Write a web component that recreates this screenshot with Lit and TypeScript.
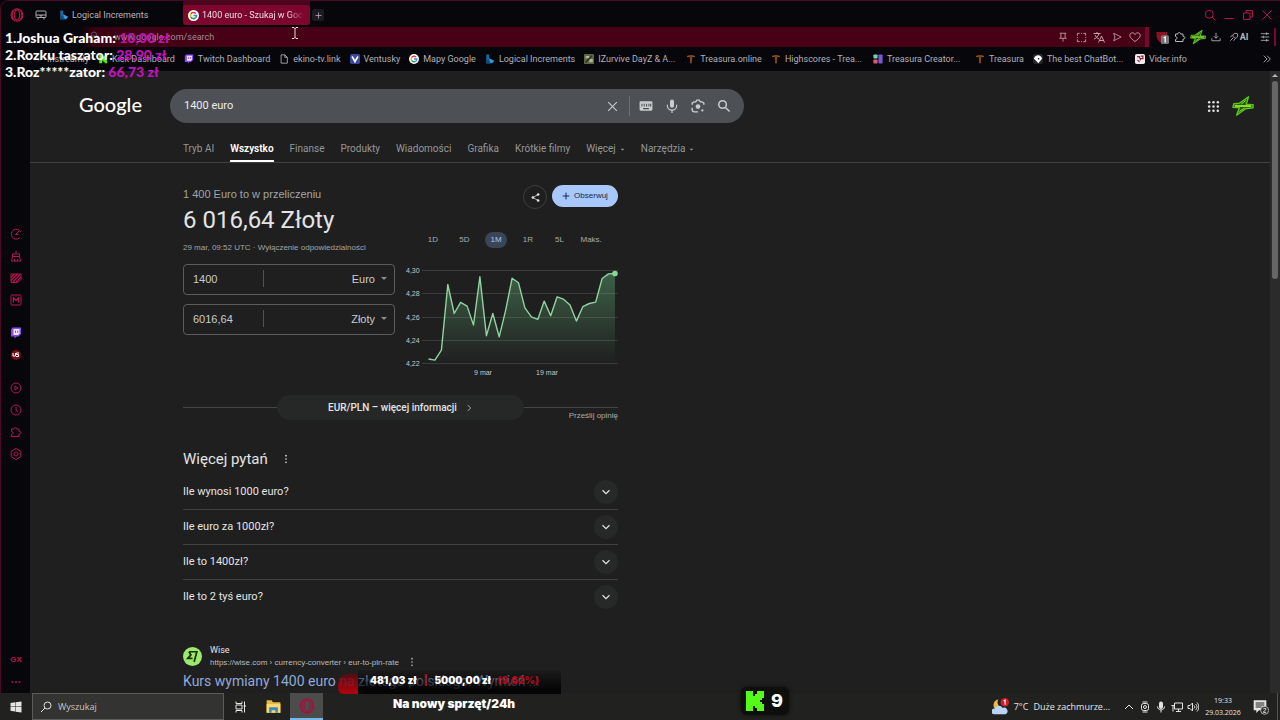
import { LitElement, html, css, svg, nothing } from "lit";
import { customElement, property } from "lit/decorators.js";
import { classMap } from "lit/directives/class-map.js";

const icon = (body: unknown, size = 12, box = 24, cls = "line") => html`
  <svg class=${cls} width=${size} height=${size} viewBox="0 0 ${box} ${box}" aria-hidden="true">${body}</svg>`;

const bolt = svg`<g stroke="#57c41c" stroke-width="1.6" fill="#1d5a10" stroke-linejoin="round">
  <path d="M18 2 8 9 2 9.500 1 13.500 8 14 5 22 15 15 23 14 23 10.500 15.500 10Z"/><path d="M3 12h18" stroke="#a4e02c" stroke-width="2"/>
  <path d="m15 6-5 4M8 18l6-4" stroke="#b8dc38" stroke-width="1"/></g>`;
const opera = svg`<ellipse cx="12" cy="12" rx="10" ry="10.500"/><ellipse cx="12" cy="12" rx="4.500" ry="8.500"/><path d="M6 4c-3 4-3 12 0 16M18 4c3 4 3 12 0 16"/>`;
const puzzle = svg`<path d="M3 6h5c-1-4 6-4 5 0h5v5c5-1 5 6 0 5v5H3v-4c4 0 4-6 0-6Z"/>`;
const twitch = svg`<path d="M5 1h17v13l-5 5h-4l-4 4v-4H2V5Z" fill="#8a4df5"/><path d="M7 4h12v9l-3 3H7Z" fill="#f0e8ff"/><path d="M11 7v5M15.500 7v5" stroke="#8a4df5" stroke-width="2"/>`;
const google = svg`<circle cx="12" cy="12" r="12" fill="#fff"/><g fill="none" stroke-width="3.400"><path d="M17 7.500A6.700 6.700 0 0 0 6.200 8.700" stroke="#e34133"/><path d="M6.200 8.700a6.700 6.700 0 0 0 0 6.600" stroke="#f3b605"/><path d="M6.200 15.300a6.700 6.700 0 0 0 10 2" stroke="#32a350"/><path d="M16.200 17.300A6.700 6.700 0 0 0 18.700 12H12" stroke="#4280ef"/></g>`;
const logical = svg`<path d="M3 1h7v12l11 5-6 5H3Z" fill="#1769a5"/><path d="m10 10 12 6-5 6-7-4Z" fill="#3a9bd8"/><path d="M3 14h8v8H3Z" fill="#114a78"/>`;
const treasura = svg`<path d="M2 5c5-3 15-3 20 0l-2 3-5-2-1 16h-4L9 6 4 8Z" fill="#a55a20"/><path d="M12 4v17" stroke="#4f2a12" stroke-width="2"/>`;
const caret = svg`<path d="m6 9 6 6 6-6"/>`;

interface Mark { label: string; art: unknown; wide?: boolean }
const MARKS: Mark[] = [
  { label: "Instreamly", art: svg`<circle cx="12" cy="12" r="8" fill="#16161d"/>` },
  { label: "Kick Dashboard", art: svg`<path d="M3 2h7v6h3V5h3V2h6v7h-3v6h3v7h-6v-3h-3v-3h-3v6H3Z" fill="#4df01c"/>` },
  { label: "Twitch Dashboard", art: twitch },
  { label: "ekino-tv.link", art: svg`<path d="M5 2h9l6 6v14H5ZM14 2v6h6" fill="none" stroke="#b9b9bd" stroke-width="2"/>` },
  { label: "Ventusky", art: svg`<rect width="24" height="24" rx="4" fill="#39489c"/><path d="m5 6 7 12 7-12" fill="none" stroke="#fff" stroke-width="4"/>` },
  { label: "Mapy Google", art: google },
  { label: "Logical Increments", art: logical },
  { label: "IZurvive DayZ & A...", art: svg`<rect width="24" height="24" rx="2" fill="#5b6448"/><path d="M4 5h9v5H4ZM14 12h7v8h-9Z" fill="#b4b593"/><path d="m4 20 15-16" stroke="#23281b" stroke-width="3"/>`, wide: true },
  { label: "Treasura.online", art: treasura },
  { label: "Highscores - Trea...", art: treasura, wide: true },
  { label: "Treasura Creator...", art: svg`<rect x="1" y="1" width="10" height="10" rx="2" fill="#73d3a4"/><rect x="1" y="13" width="10" height="10" rx="2" fill="#d85b78"/><rect x="13" y="1" width="10" height="22" rx="2" fill="#7657d8"/>`, wide: true },
  { label: "Treasura", art: treasura },
  { label: "The best ChatBot...", art: svg`<rect width="24" height="24" rx="5" fill="#25252c"/><path d="M5 6c6-4 9-4 14 0l3 5-9 11L2 11Z" fill="#fff"/><path d="m12 10 3 3" stroke="#25252c" stroke-width="3"/>`, wide: true },
  { label: "Vider.info", art: svg`<rect width="24" height="24" rx="4" fill="#f3e9ec"/><path d="M5 6h6v5M14 5h5v6h-6v4M6 14l5 5" fill="none" stroke="#8d2742" stroke-width="3"/>` },
];

const RATES = [
  4.224, 4.2231, 4.2317, 4.288, 4.2631, 4.2726, 4.2694, 4.2531, 4.2946, 4.244, 4.2631, 4.2431, 4.266, 4.2934, 4.2894,
  4.268, 4.2603, 4.258, 4.2737, 4.2611, 4.2774, 4.2754, 4.2703, 4.2566, 4.2689, 4.2717, 4.2729, 4.2931, 4.2971, 4.2974,
];

@customElement("rate-chart")
class RateChart extends LitElement {
  static styles = css`
    :host { display: block; }
    .plot { display: block; }
    .label { font: 7px "Liberation Sans", Arial, sans-serif; fill: #c4c7c5; }
    .rule { stroke: #3a3b3c; }
    .trend { fill: none; stroke: #8fd3a0; stroke-width: 1.4; stroke-linejoin: round; }
  `;
  render() {
    const y = (v: number) => 6.5 + ((4.3 - v) / 0.08) * 93.2;
    const x = (i: number) => 22.5 + i * 6.43;
    const line = RATES.map((v, i) => `${x(i).toFixed(1)},${y(v).toFixed(1)}`).join(" ");
    const end = RATES.length - 1;
    return html`<svg class="plot" width="212" height="115" viewBox="0 0 212 115" role="img" aria-label="EUR/PLN">
      <defs><linearGradient id="fade" x1="0" y1="0" x2="0" y2="1">
        <stop offset="0" stop-color="#6fc987" stop-opacity=".38"/><stop offset="1" stop-color="#6fc987" stop-opacity="0"/>
      </linearGradient></defs>
      ${[4.3, 4.28, 4.26, 4.24, 4.22].map((v) => svg`
        <line class="rule" x1="16" x2="212" y1=${Math.floor(y(v)) + 0.5} y2=${Math.floor(y(v)) + 0.5}/>
        <text class="label" x="0" y=${Math.floor(y(v)) + 3}>${v.toFixed(2).replace(".", ",")}</text>`)}
      <polygon fill="url(#fade)" points="22.5,99.7 ${line} ${x(end)},99.7"/>
      <polyline class="trend" points=${line}/>
      <circle cx=${x(end)} cy=${y(RATES[end])} r="2.8" fill="#7fd99a"/>
      <text class="label" x="77" y="111" text-anchor="middle">9 mar</text>
      <text class="label" x="141" y="111" text-anchor="middle">19 mar</text>
    </svg>`;
  }
}

@customElement("currency-field")
class CurrencyField extends LitElement {
  @property() amount = "";
  @property() unit = "";
  static styles = css`
    :host { display: flex; align-items: center; height: 31px; box-sizing: border-box; padding-bottom: 2px; border: 1px solid #5a5c5f; border-radius: 4px; }
    .amount, .unit { font: 11px "Liberation Sans", Arial, sans-serif; color: #c9cbcd; background: none; border: 0; outline: 0; padding: 0; }
    .amount { width: 71px; padding-left: 9px; box-sizing: border-box; }
    .split { width: 1px; height: 17px; margin-left: 8px; background: #505255; }
    .unit { flex: 1; min-width: 0; appearance: none; text-align-last: right; }
    .tri { margin: 0 7px 0 6px; border: 3px solid transparent; border-top-color: #8d9093; border-bottom: 0; }
  `;
  render() {
    return html`<input class="amount" aria-label="Kwota" .value=${this.amount} />
      <span class="split"></span>
      <select class="unit" aria-label="Waluta"><option>${this.unit}</option></select>
      <span class="tri"></span>`;
  }
}

@customElement("browser-chrome")
class BrowserChrome extends LitElement {
  static styles = css`
    :host { display: block; font: 9px/12px Roboto, sans-serif; color: #b7b6bd; }
    svg { display: block; flex: none; }
    .line { fill: none; stroke: currentColor; stroke-width: 2; }
    button { font: inherit; color: inherit; background: none; border: 0; padding: 0; display: flex; align-items: center; justify-content: center; }
    .tabs { display: flex; height: 27px; align-items: center; padding: 4px 7px 1px 10px; box-sizing: border-box; }
    .red { color: #b01747; }
    .space { margin: 0 12px 0 11px; color: #a9a8b0; }
    .tab { display: flex; align-items: center; gap: 3px; width: 124px; height: 20px; box-sizing: border-box; }
    .tab.on { width: 127px; padding-left: 5px; color: #eadde1; background: #7c062e; border-radius: 3px; box-shadow: 0 -5px 0 #4c051d; }
    .name { flex: 1; overflow: hidden; white-space: nowrap; }
    .on .name { margin-right: 6px; mask-image: linear-gradient(90deg, #000 84%, transparent); }
    .plus { width: 12px; height: 12px; margin-left: 2px; background: #1b1b24; border-radius: 2px; }
    .controls { display: flex; gap: 7px; margin-left: auto; }
    .address { display: flex; align-items: center; height: 20px; padding: 0 4px 0 60px; }
    .field { display: flex; flex: 1; align-items: center; height: 20px; padding: 0 1px 0 28px; box-sizing: border-box; background: linear-gradient(90deg, transparent 20px, #3a0012 34px, #470015 130px); border-right: 4px solid #7c062e; color: #c3a2ad; }
    .lock { color: #6c5560; margin-right: 14px; }
    .url { flex: 1; min-width: 0; padding: 0; border: 0; outline: 0; background: none; font: inherit; color: #a08b94; }
    .tool { width: 18px; height: 18px; }
    .tools { display: flex; padding-left: 4px; align-items: center; }
    .ai { width: 31px; padding-right: 4px; box-sizing: border-box; gap: 1px; font-weight: 700; }
    .edge { width: 2px; height: 18px; background: #7c062e; }
    .marks { display: flex; align-items: center; height: 24px; padding: 0 8px 0 33px; gap: 9px; white-space: nowrap; overflow: hidden; }
    .mark { display: flex; align-items: center; gap: 4px; color: #b1b1b8; text-decoration: none; }
    .mark.wide { min-width: 93px; }
    .all { margin-left: auto; }
  `;
  render() {
    const tool = (label: string, art: unknown, size = 10) =>
      html`<button class="tool" aria-label=${label}>${icon(art, size)}</button>`;
    return html`
      <div class="tabs">
        <button class="red" aria-label="Menu">${icon(opera, 14)}</button>
        <button class="space" aria-label="Obszary">${icon(svg`<rect x="2" y="4" width="20" height="13" rx="2"/><path d="M2 12h20M6 17v4M18 17v4M10 12v2h4v-2"/>`, 12)}</button>
        <div class="tab">${icon(logical, 10, 24, "art")}<span class="name">Logical Increments</span></div>
        <div class="tab on">${icon(google, 11, 24, "art")}<span class="name">1400 euro - Szukaj w Google</span></div>
        <button class="plus" aria-label="Nowa karta">${icon(svg`<path d="M12 4v16M4 12h16"/>`, 9)}</button>
        <div class="controls red">
          <button aria-label="Szukaj">${icon(svg`<circle cx="10.500" cy="10.500" r="8"/><path d="m16 16 6 6"/>`)}</button>
          <button aria-label="Minimalizuj">${icon(svg`<path d="M3 19h18"/>`)}</button>
          <button aria-label="Przywróć">${icon(svg`<path d="M3 8h13v13H3ZM8 8V3h13v13h-5"/>`)}</button>
          <button aria-label="Zamknij">${icon(svg`<path d="m3 3 18 18M21 3 3 21"/>`)}</button>
        </div>
      </div>
      <div class="address">
        <div class="field">
          <span class="lock">${icon(svg`<rect x="4" y="10" width="16" height="12"/><path d="M7 10V7a5 5 0 0 1 10 0v3"/>`)}</span>
          <input class="url" aria-label="Adres" value="www.google.com/search" />
          ${tool("Przypnij", svg`<path d="M4 3h16M7 3v12M17 3v12M3 15h18M12 15v8"/>`)}
          ${tool("Migawka", svg`<path d="M3 8V3h5M16 3h5v5M21 16v5h-5M8 21H3v-5M11 3h2M11 21h2M3 11v2M21 11v2"/>`, 11)}
          ${tool("Tłumacz", svg`<path d="M1 5h14M8 2v3M12 5c-1 5-5 9-10 11M4 8c2 4 4 6 8 8M11 23l6-13 6 13M13 19h8"/>`, 12)}
          ${tool("Wyślij", svg`<path d="m4 3 18 9-18 9 3-9Z"/>`)}
          ${tool("Ulubione", svg`<path d="M12 21C2 14 1 10 2 7c2-5 8-4 10 0 2-4 8-5 10 0 1 3 0 7-10 14Z"/>`, 12)}
        </div>
        <div class="tools">
          <button class="tool" aria-label="Blokada">${icon(svg`<path d="M1 2h20v7c0 7-5 11-10 13C6 20 1 16 1 9Z" fill="#8c1220"/><rect x="9" y="8" width="15" height="16" rx="3" fill="#75757b"/><path d="m14 13 3-2v10" fill="none" stroke="#fff" stroke-width="2.400"/>`, 13, 24, "art")}</button>
          ${tool("Rozszerzenia", puzzle, 12)}
          <button class="tool" aria-label="Profil">${icon(bolt, 16, 24, "art")}</button>
          ${tool("Pobrane", svg`<path d="M12 2v13M7 10l5 5 5-5M2 15v6h20v-6"/>`)}
          <button class="tool ai">${icon(svg`<path d="m3 21 7-7M9 7l5-4 6 1 1 6-4 5-4-1-3-3ZM8 8 3 12M15 16l-4 5"/>`, 10)}AI</button>
          ${tool("Ustawienia", svg`<path d="M2 4h20M2 12h20M2 20h20M16 1v6M8 9v6M16 17v6"/>`)}
          <span class="edge"></span>
        </div>
      </div>
      <nav class="marks">
        ${MARKS.map((m) => html`<a class=${classMap({ mark: true, wide: !!m.wide })} href="#">${icon(m.art, 10, 24, "art")}${m.label}</a>`)}
        <button class="all" aria-label="Więcej zakładek">${icon(svg`<path d="m4 4 8 8-8 8M12 4l8 8-8 8"/>`, 10)}</button>
      </nav>`;
  }
}

@customElement("side-rail")
class SideRail extends LitElement {
  static styles = css`
    :host { display: flex; flex-direction: column; gap: 11px; width: 30px; padding: 152px 0 0 2px; box-sizing: border-box; color: #b5184b; }
    .group { display: flex; flex-direction: column; }
    .last { margin-top: auto; }
    .item { display: grid; place-items: center; height: 22px; padding: 0; border: 0; background: none; color: inherit; font: 700 8px/12px "Liberation Sans", sans-serif; }
    .line { fill: none; stroke: currentColor; stroke-width: 2; }
    svg { display: block; }
  `;
  render() {
    const item = (label: string, art: unknown, cls = "line") => html`<button class="item" aria-label=${label}>${icon(art, 12, 24, cls)}</button>`;
    return html`
      <div class="group">
        ${item("Kontrola GX", svg`<path d="M19 20a10 10 0 1 1 2-13M11 13l8-8M11 13h6"/>`)}
        ${item("Czyszczenie", svg`<path d="M12 1v7M5 8h14v5H5ZM3 22l2-9h14l2 9ZM9 22v-4M15 22v-4"/>`)}
        ${item("Mods", svg`<path d="M2 4h20v11l-7 6H2Z"/><path d="m2 11 7-7M2 17 15 4M6 20 20 5M12 20 22 10" stroke-width="2.400"/>`)}
        ${item("Mapa", svg`<rect x="2" y="2" width="20" height="20" rx="2"/><path d="M7 17V8l5 5 5-5v9" stroke-width="2.400"/>`)}
      </div>
      <div class="group">
        ${item("Twitch", twitch, "art")}
        ${item("Tarcza", svg`<circle cx="12" cy="12" r="10" fill="#7c0d18"/><path d="M6 8v6h5V8M18 8h-5v3h4v4h-5" fill="none" stroke="#fff" stroke-width="2"/>`, "art")}
      </div>
      <div class="group">
        ${item("Odtwarzacz", svg`<circle cx="12" cy="12" r="10"/><path d="m10 8 6 4-6 4Z"/>`)}
        ${item("Historia", svg`<circle cx="12" cy="12" r="10"/><path d="M12 6v7l4 2"/>`)}
        ${item("Rozszerzenia", puzzle)}
        ${item("Ustawienia", svg`<path d="m12 1 9.500 5.500v11L12 23l-9.500-5.500v-11Z"/><circle cx="12" cy="12" r="4"/>`)}
      </div>
      <div class="group last">
        <button class="item">GX</button>
        ${item("Więcej", svg`<path d="M3 12h4M10 12h4M17 12h4" stroke-width="3"/>`)}
      </div>`;
  }
}

@customElement("search-page")
class SearchPage extends LitElement {
  static styles = css`
    :host { display: block; flex: 1; min-width: 0; overflow: hidden; background: #1f1f1f; color: #e3e4e6; font: 11px/16px Roboto, sans-serif; }
    svg { display: block; flex: none; }
    .line { fill: none; stroke: currentColor; stroke-width: 2; }
    .art { fill: currentColor; }
    button { font: inherit; color: inherit; background: none; border: 0; padding: 0; display: flex; align-items: center; justify-content: center; }
    h1, h2, h3, p { margin: 0; font-weight: 400; }
    a { color: inherit; text-decoration: none; }
    .top { display: grid; grid-template-columns: 140px minmax(0, 574px) 1fr; align-items: center; padding: 18px 16px 0 0; }
    .logo { padding: 0 0 4px 49px; font: 500 20px/28px Lato, sans-serif; color: #fff; }
    .search { display: flex; align-items: center; height: 34px; padding: 0 12px 0 14px; box-sizing: border-box; border-radius: 17px; background: #4d5155; color: #c9cccf; }
    .query { flex: 1; min-width: 0; padding: 0; border: 0; outline: 0; background: none; font: inherit; color: #eceded; }
    .bar { width: 1px; height: 20px; margin: 0 8px 0 10px; background: #6c7074; }
    .key { width: 16px; height: 16px; margin-left: 10px; }
    .bar + .key { margin-left: 0; }
    .account { display: flex; justify-content: flex-end; align-items: center; gap: 12px; }
    .kinds { display: flex; align-items: flex-end; gap: 16px; height: 40px; box-sizing: border-box; padding-left: 153px; border-bottom: 1px solid #3f4143; font-size: 10px; color: #94979a; }
    .kind { display: flex; align-items: center; gap: 4px; padding-bottom: 3px; border-bottom: 2px solid transparent; }
    .kind.on { color: #fff; font-weight: 600; border-color: #fff; }
    .results { max-width: 435px; padding-left: 153px; }
    .convert { display: grid; grid-template-columns: 1fr 1fr; gap: 11px; padding-top: 22px; }
    .arial { font-family: "Liberation Sans", Arial, sans-serif; }
    .lead { font-size: 11px; line-height: 18px; color: #a2a5a8; }
    .total { margin-top: 2px; font-size: 24px; line-height: 30px; white-space: nowrap; }
    .stamp { margin: 7px 0 10px; font-size: 8px; line-height: 12px; color: #a2a5a8; white-space: nowrap; }
    currency-field + currency-field { margin-top: 9px; }
    .actions { display: flex; justify-content: flex-end; gap: 5px; }
    .share { width: 24px; height: 24px; box-sizing: border-box; border: 1px solid #3c3e41; border-radius: 50%; }
    .follow { width: 66px; height: 22px; gap: 4px; border-radius: 11px; background: #a8c7fa; color: #14284f; font-size: 8px; }
    .ranges { display: grid; grid-template-columns: repeat(6, 1fr); justify-items: center; margin: 23px 11px 16px; color: #a9acaf; font-size: 8px; }
    .range { width: 22px; height: 16px; border-radius: 8px; }
    .range.on { background: #3a4556; color: #a8c7fa; }
    .more { display: grid; grid-template-columns: 94px 1fr 94px; align-items: start; margin-top: 16px; }
    .rule { margin-top: 12px; border-top: 1px solid #434548; text-align: right; font-size: 8px; color: #a9acaf; }
    .info { height: 25px; gap: 8px; border-radius: 13px; background: #262828; font-size: 10px; font-weight: 500; }
    .heading { display: flex; align-items: center; gap: 13px; margin: 24px 0 5px; font-size: 15px; line-height: 22px; }
    .ask { display: flex; width: 100%; justify-content: space-between; height: 35px; box-sizing: border-box; border-bottom: 1px solid #3f4143; }
    .ask:last-child { border-color: transparent; }
    .round { display: grid; place-items: center; width: 24px; height: 24px; border-radius: 50%; background: #272929; }
    .hit { padding-top: 29px; }
    .site { display: flex; align-items: center; gap: 8px; }
    .who { font-size: 9px; line-height: 13px; }
    .path { display: flex; gap: 8px; font-size: 8px; line-height: 12px; color: #b9bcbe; }
    .title { margin-top: 2px; font-size: 14px; line-height: 20px; color: #8fa9dc; white-space: nowrap; }
  `;
  render() {
    const kinds = ["Tryb AI", "Wszystko", "Finanse", "Produkty", "Wiadomości", "Grafika", "Krótkie filmy", "Więcej", "Narzędzia"];
    const dots = svg`<circle cx="12" cy="4" r="2"/><circle cx="12" cy="12" r="2"/><circle cx="12" cy="20" r="2"/>`;
    return html`
      <header class="top">
        <a class="logo" href="#">Google</a>
        <form class="search" role="search">
          <input class="query" aria-label="Szukaj" value="1400 euro" />
          <button type="button" aria-label="Wyczyść">${icon(svg`<path d="m4 4 16 16M20 4 4 20"/>`, 13)}</button>
          <span class="bar"></span>
          <button type="button" class="key" aria-label="Klawiatura">${icon(svg`<rect x="1" y="4" width="22" height="16" rx="2"/><path d="M5 8v5M9 8v5M13 8v5M17 8v5M20 8v5M7 16.500h10" stroke="#4d5155" stroke-width="1.800"/>`, 14, 24, "art")}</button>
          <button type="button" class="key" aria-label="Mikrofon">${icon(svg`<rect x="8.500" y="1" width="7" height="14" rx="3.500"/><path d="M4 10v1a8 8 0 0 0 16 0v-1M12 19v5" fill="none" stroke="currentColor" stroke-width="2"/>`, 14, 24, "art")}</button>
          <button type="button" class="key" aria-label="Obiektyw">${icon(svg`<path d="M2 10V7l3-2h3l2-3h4l2 3h3l3 2v3M2 15v3a4 4 0 0 0 4 4h6" fill="none" stroke="currentColor" stroke-width="2.400"/><circle cx="12" cy="13" r="4"/><circle cx="19.500" cy="19.500" r="2"/>`, 14, 24, "art")}</button>
          <button class="key" aria-label="Szukaj w Google">${icon(svg`<circle cx="9.500" cy="9.500" r="6.500" stroke-width="2.600"/><path d="m14.500 14.500 7 7" stroke-width="2.600"/>`, 14)}</button>
        </form>
        <div class="account">
          <button aria-label="Aplikacje Google">${icon([4, 12, 20].map((y) => [4, 12, 20].map((x) => svg`<circle cx=${x} cy=${y} r="2.300"/>`)), 13, 24, "art")}</button>
          <button aria-label="Konto">${icon(bolt, 22, 24, "face")}</button>
        </div>
      </header>
      <nav class="kinds">
        ${kinds.map((k, i) => html`<a class=${classMap({ kind: true, on: i === 1 })} href="#">${k}${i > 6 ? icon(svg`<path d="m3 8 9 9 9-9Z"/>`, 5, 24, "art") : nothing}</a>`)}
      </nav>
      <main class="results">
        <section class="convert">
          <div>
            <p class="lead arial">1 400 Euro to w przeliczeniu</p>
            <h1 class="total">6 016,64 Złoty</h1>
            <p class="stamp arial">29 mar, 09:52 UTC · Wyłączenie odpowiedzialności</p>
            <currency-field amount="1400" unit="Euro"></currency-field>
            <currency-field amount="6016,64" unit="Złoty"></currency-field>
          </div>
          <div class="arial">
            <div class="actions">
              <button class="share" aria-label="Udostępnij">${icon(svg`<path d="M19 4 5 12l14 8" fill="none" stroke="currentColor" stroke-width="2"/><circle cx="19" cy="4" r="3.500"/><circle cx="5" cy="12" r="3.500"/><circle cx="19" cy="20" r="3.500"/>`, 9, 24, "art")}</button>
              <button class="follow">${icon(svg`<path d="M12 2v20M2 12h20" stroke-width="3"/>`, 8)}Obserwuj</button>
            </div>
            <div class="ranges">
              ${["1D", "5D", "1M", "1R", "5L", "Maks."].map((r) => html`<button class=${classMap({ range: true, on: r === "1M" })}>${r}</button>`)}
            </div>
            <rate-chart></rate-chart>
          </div>
        </section>
        <div class="more">
          <div class="rule"></div>
          <button class="info">EUR/PLN – więcej informacji ${icon(svg`<path d="m8 3 9 9-9 9"/>`, 8)}</button>
          <div class="rule arial"><a href="#">Prześlij opinię</a></div>
        </div>
        <section>
          <h2 class="heading">Więcej pytań ${icon(dots, 10, 24, "art")}</h2>
          ${["Ile wynosi 1000 euro?", "Ile euro za 1000zł?", "Ile to 1400zł?", "Ile to 2 tyś euro?"].map((q) => html`<button class="ask">${q}<span class="round">${icon(caret, 14)}</span></button>`)}
        </section>
        <article class="hit">
          <div class="site">
            ${icon(svg`<circle cx="12" cy="12" r="12" fill="#9fe870"/><path d="M7.500 6h10l-3.500 13M7.500 6l2.500 4-4 4.500h6" fill="none" stroke="#163300" stroke-width="2.200"/>`, 19, 24, "badge")}
            <div>
              <div class="who">Wise</div>
              <div class="path arial">https://wise.com › currency-converter › eur-to-pln-rate ${icon(dots, 10, 24, "art")}</div>
            </div>
          </div>
          <h3 class="title"><a href="#">Kurs wymiany 1400 euro na złotego polskiego. Wymień ...</a></h3>
        </article>
      </main>`;
  }
}

@customElement("task-bar")
class TaskBar extends LitElement {
  static styles = css`
    :host { display: flex; align-items: center; height: 27px; background: #21211f; color: #e4e4e4; font: 9px/12px "Open Sans", sans-serif; }
    svg { display: block; flex: none; }
    .line { fill: none; stroke: currentColor; stroke-width: 2; }
    .art { fill: currentColor; }
    button { padding: 0; border: 0; background: none; color: inherit; font: inherit; display: flex; align-items: center; justify-content: center; }
    .start { width: 32px; }
    .find { display: flex; align-items: center; gap: 6px; width: 192px; height: 27px; padding-left: 7px; box-sizing: border-box; border: 1px solid #5b5b5a; background: #333332; }
    .text { flex: 1; min-width: 0; padding: 0; border: 0; outline: 0; background: none; font: inherit; color: inherit; }
    .text::placeholder { color: #c6c6c6; }
    .app { width: 33px; height: 27px; box-sizing: border-box; }
    .app.on { background: #4b4c4c; border-bottom: 2px solid #76b9ed; color: #a3123f; }
    .tray { display: flex; align-items: center; gap: 4px; margin-left: auto; padding-right: 2px; }
    .weather { gap: 5px; margin-right: 9px; white-space: nowrap; }
    .clock { width: 40px; text-align: center; font-size: 7px; line-height: 12px; }
    .note { margin: 0 4px 0 6px; }
    .show { width: 1px; height: 27px; background: #555; }
  `;
  render() {
    return html`
      <button class="start" aria-label="Start">${icon(svg`<path d="m1 4 9-1.500V11H1ZM11 2.300 23 1v10H11ZM1 12h9v9L1 19.500ZM11 12h12v11l-12-1.700Z"/>`, 12, 24, "art")}</button>
      <label class="find">${icon(svg`<circle cx="15" cy="9" r="7"/><path d="M10 14 2 22"/>`, 12)}<input class="text" placeholder="Wyszukaj" /></label>
      <button class="app" aria-label="Widok zadań">${icon(svg`<path d="M2 1v4h12V1M2 23v-4h12v4M2 8h12v8H2ZM19 1v22M17 10h5"/>`, 12)}</button>
      <button class="app" aria-label="Eksplorator">${icon(svg`<path d="M1 2h8l2 3h12v17H1Z" fill="#e8b93c"/><path d="M1 8h22v14H1Z" fill="#fbd96a"/><path d="M5 22v-9h14v9h-4v-4H9v4Z" fill="#3b86c6"/>`, 15, 24, "art")}</button>
      <button class="app on" aria-label="Opera GX">${icon(opera, 16)}</button>
      <div class="tray">
        <button class="weather">${icon(svg`<path d="M9 2a8 8 0 1 0 8 12A8 8 0 0 1 9 2Z" fill="#e9b949"/><path d="M3 23a4 4 0 0 1 1-8 6 6 0 0 1 11-1 4.500 4.500 0 0 1 4 9Z" fill="#b9d4f7"/><circle cx="18" cy="6" r="6" fill="#c8202b"/><path d="m16.500 4.500 2-1.500v6.500" fill="none" stroke="#fff" stroke-width="1.500"/>`, 17, 24, "art")}<span>7°C</span><span>Duże zachmurze...</span></button>
        ${icon(svg`<path d="m4 16 8-8 8 8"/>`)}
        ${icon(svg`<rect x="5" y="5" width="14" height="14" rx="4"/><circle cx="12" cy="12" r="3"/><path d="M7 2h10M7 22h10"/>`)}
        ${icon(svg`<rect x="8" y="1" width="8" height="15" rx="4"/><path d="M5 11c0 9 14 9 14 0M12 18v5" fill="none" stroke="currentColor" stroke-width="2"/>`, 12, 24, "art")}
        ${icon(svg`<path d="M7 4h16v12H7ZM1 9h6M4 9v12M10 21h10M15 16v5"/>`)}
        ${icon(svg`<path d="M2 9h4l5-5v16l-5-5H2ZM14 9c2 2 2 4 0 6M17 6c4 4 4 8 0 12M20 3c5 6 5 12 0 18"/>`)}
        <div class="clock">19:33<br />29.03.2026</div>
        <button class="note" aria-label="Powiadomienia">${icon(svg`<path d="M1 2h19v15H9l-4 4v-4H1Z"/><path d="M4 6h13M4 9h13M4 12h9" stroke="#21211f" stroke-width="1.500"/><circle cx="17.500" cy="17" r="6" fill="#2b2b2b" stroke="currentColor"/><path d="M15.500 15c1-2 4-1 4 0 0 2-4 3-4 5h4" fill="none" stroke="currentColor" stroke-width="1.500"/>`, 16, 24, "art")}</button>
        <span class="show"></span>
      </div>`;
  }
}

@customElement("app-root")
class AppRoot extends LitElement {
  static styles = css`
    :host { display: flex; flex-direction: column; position: relative; height: 100vh; overflow: hidden; background: #06060b; }
    .frame { display: flex; flex: 1; flex-direction: column; min-height: 0; }
    .glow { position: absolute; inset: 0 0 27px; border: 1px solid #4a0a22; border-width: 1px 0 0 1px; border-radius: 9px 0 0 0; pointer-events: none; }
    .view { display: flex; flex: 1; min-height: 0; }
    .scroll { display: flex; flex-direction: column; align-items: center; gap: 4px; width: 10px; padding-top: 3px; box-sizing: border-box; background: #2b2b2b; }
    .up { border: 3px solid transparent; border-top: 0; border-bottom-color: #b5b5b5; }
    .thumb { width: 6px; height: 32%; border-radius: 3px; background: #666; }
    .donors { position: absolute; top: 29px; left: 5px; margin: 0; padding: 0; list-style: none; font: 900 14px/17px Lato, sans-serif; color: #fff; white-space: nowrap; }
    .sum { color: #c312bd; }
    .goal { position: absolute; left: 338px; bottom: 26px; display: flex; align-items: flex-end; }
    .cap { width: 20px; height: 20px; border-radius: 10px 0 0 6px; background: linear-gradient(#5c0a10, #c4000c); opacity: .9; }
    .meter { display: flex; gap: 7px; width: 203px; height: 24px; padding: 2px 0 0 12px; box-sizing: border-box; background: linear-gradient(rgba(0, 0, 0, 0.1), rgba(0, 0, 0, 0.85) 80%); font: 900 10px/16px Inter, sans-serif; color: #fff; white-space: nowrap; }
    .part { color: #b00a18; }
    .purpose { position: absolute; left: 393px; bottom: 8px; font: 900 12px/16px Inter, sans-serif; color: #fff; }
    .viewers { position: absolute; left: 741px; bottom: 5px; display: flex; align-items: center; gap: 7px; height: 28px; padding: 0 6px 0 5px; border-radius: 6px; background: #0e0e0d; box-shadow: 0 0 4px #0e0e0d; font: 800 18px/28px Inter, sans-serif; color: #fff; }
    .pointer { position: absolute; left: 291px; top: 27px; }
  `;
  render() {
    return html`
      <div class="frame">
        <browser-chrome></browser-chrome>
        <div class="view">
          <side-rail></side-rail>
          <search-page></search-page>
          <div class="scroll"><span class="up"></span><span class="thumb"></span></div>
        </div>
      </div>
      <task-bar></task-bar>
      <div class="glow"></div>
      <ol class="donors">
        <li>1.Joshua Graham: <span class="sum">10,00 zł</span></li>
        <li>2.Rozku taszator: <span class="sum">28,90 zł</span></li>
        <li>3.Roz*****zator: <span class="sum">66,73 zł</span></li>
      </ol>
      <div class="goal"><span class="cap"></span>
        <div class="meter"><span>481,03 zł</span><span class="part">|</span><span>5000,00 zł</span><span class="part">(9,62%)</span></div>
      </div>
      <div class="purpose">Na nowy sprzęt/24h</div>
      <div class="viewers">
        <svg width="18" height="20" viewBox="0 0 18 20" aria-hidden="true"><path d="M0 0h7v5h2V3h2V0h7v7h-2v2h-2v2h2v2h2v7h-7v-3H9v-2H7v5H0Z" fill="#53fc18"/></svg>
        <span>9</span>
      </div>
      <svg class="pointer" width="8" height="12" viewBox="0 0 8 12" aria-hidden="true"><path d="M1 .5h2l1 1 1-1h2M4 1v10M1 11.500h2l1-1 1 1h2" fill="none" stroke="#e6dfe2"/></svg>`;
  }
}
